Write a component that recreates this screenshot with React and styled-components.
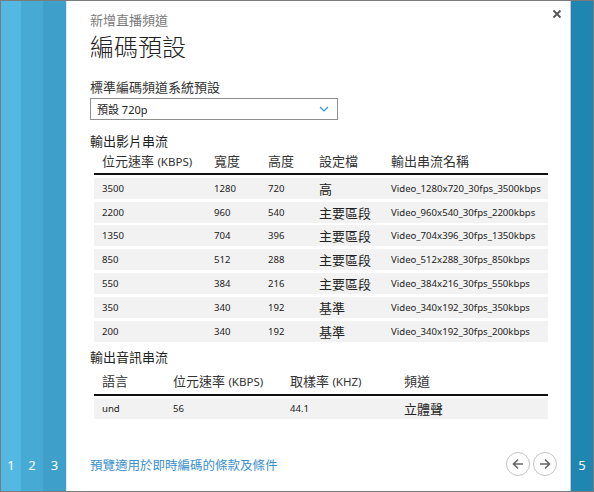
import styled, { createGlobalStyle } from "styled-components";

const GlobalStyle = createGlobalStyle`
  body {
    margin: 0;
    font-family: "Noto Sans", "Noto Sans CJK TC", sans-serif;
    color: #222;
  }
`;

const videoRows = [
  ["3500", "1280", "720", "高", "Video_1280x720_30fps_3500kbps"],
  ["2200", "960", "540", "主要區段", "Video_960x540_30fps_2200kbps"],
  ["1350", "704", "396", "主要區段", "Video_704x396_30fps_1350kbps"],
  ["850", "512", "288", "主要區段", "Video_512x288_30fps_850kbps"],
  ["550", "384", "216", "主要區段", "Video_384x216_30fps_550kbps"],
  ["350", "340", "192", "基準", "Video_340x192_30fps_350kbps"],
  ["200", "340", "192", "基準", "Video_340x192_30fps_200kbps"],
];

export default function App() {
  return (
    <>
      <GlobalStyle />
      <Frame>
        <Strip $bg="#53b8e2" $w={20}><StepNum>1</StepNum></Strip>
        <Strip $bg="#46aad4" $w={22}><StepNum>2</StepNum></Strip>
        <Strip $bg="#3d9fca" $w={23}><StepNum>3</StepNum></Strip>
        <Panel>
          <Close aria-label="close">
            <svg width="10" height="10" viewBox="0 0 10 10">
              <path d="M1.5 1.5L8.5 8.5M8.5 1.5L1.5 8.5" stroke="#555" strokeWidth="1.8" />
            </svg>
          </Close>
          <Subtitle>新增直播頻道</Subtitle>
          <Title>編碼預設</Title>
          <Label>標準編碼頻道系統預設</Label>
          <Select>
            <span>預設 720p</span>
            <svg width="10" height="6" viewBox="0 0 10 6">
              <path d="M1 1L5 5L9 1" stroke="#2f95d8" strokeWidth="1.2" fill="none" />
            </svg>
          </Select>

          <SectionTitle $top={12}>輸出影片串流</SectionTitle>
          <Table>
            <HeadRow $cols="112px 54px 51px 72px 1fr">
              <span>位元速率 <Small>(KBPS)</Small></span>
              <span>寬度</span>
              <span>高度</span>
              <span>設定檔</span>
              <span>輸出串流名稱</span>
            </HeadRow>
            {videoRows.map((r) => (
              <Row key={r[4]} $cols="112px 54px 51px 72px 1fr">
                <span>{r[0]}</span>
                <span>{r[1]}</span>
                <span>{r[2]}</span>
                <Cjk>{r[3]}</Cjk>
                <span>{r[4]}</span>
              </Row>
            ))}
          </Table>

          <SectionTitle $top={6}>輸出音訊串流</SectionTitle>
          <Table>
            <HeadRow $cols="71px 117px 114px 1fr" $gap={5}>
              <span>語言</span>
              <span>位元速率 <Small>(KBPS)</Small></span>
              <span>取樣率 <Small>(KHZ)</Small></span>
              <span>頻道</span>
            </HeadRow>
            <Row $cols="71px 117px 114px 1fr">
              <span>und</span>
              <span>56</span>
              <span>44.1</span>
              <Cjk>立體聲</Cjk>
            </Row>
          </Table>

          <Footer>
            <TermsLink href="#">預覽適用於即時編碼的條款及條件</TermsLink>
            <Nav>
              <RoundBtn aria-label="previous">
                <svg width="12" height="12" viewBox="0 0 12 12">
                  <path d="M11 6H1.5M6 1.5L1.5 6L6 10.5" stroke="#666" strokeWidth="1.6" fill="none" />
                </svg>
              </RoundBtn>
              <RoundBtn aria-label="next">
                <svg width="12" height="12" viewBox="0 0 12 12">
                  <path d="M1 6H10.5M6 1.5L10.5 6L6 10.5" stroke="#666" strokeWidth="1.6" fill="none" />
                </svg>
              </RoundBtn>
            </Nav>
          </Footer>
        </Panel>
        <Strip $bg="#1f86b1" $w={22} $edge><StepNum>5</StepNum></Strip>
      </Frame>
    </>
  );
}

const Frame = styled.div`
  width: 594px;
  height: 492px;
  box-sizing: border-box;
  border: 1px solid #7b7b7b;
  display: flex;
`;

const Strip = styled.div`
  width: ${(p) => p.$w}px;
  flex-shrink: 0;
  background: ${(p) => p.$bg};
  border-left: ${(p) => (p.$edge ? "1px solid #c9c9c9" : "none")};
  display: flex;
  flex-direction: column;
  justify-content: flex-end;
  align-items: center;
  padding-bottom: 18px;
`;

const StepNum = styled.span`
  color: #fff;
  font-size: 13px;
  line-height: 16px;
`;

const Panel = styled.div`
  position: relative;
  flex: 1;
  background: #fff;
  border-left: 1px solid #d4ecf7;
  padding: 10px 22px 0 23px;
  display: flex;
  flex-direction: column;
`;

const Close = styled.button`
  position: absolute;
  top: 7px;
  right: 7px;
  width: 12px;
  height: 12px;
  padding: 0;
  border: none;
  background: none;
  display: flex;
  align-items: center;
  justify-content: center;
`;

const Subtitle = styled.div`
  font-size: 13px;
  line-height: 18px;
  color: #7a7a7a;
  font-family: "Noto Sans CJK TC", sans-serif;
`;

const Title = styled.h1`
  margin: 1px 0 0;
  font-size: 24px;
  line-height: 32px;
  font-weight: 300;
  color: #222;
  font-family: "Noto Sans CJK TC", sans-serif;
`;

const Label = styled.div`
  margin-top: 16px;
  font-size: 13px;
  line-height: 18px;
  color: #333;
  font-family: "Noto Sans CJK TC", sans-serif;
`;

const Select = styled.div`
  margin-top: 2px;
  width: 248px;
  height: 22px;
  box-sizing: border-box;
  border: 1px solid #8f8f8f;
  display: flex;
  align-items: center;
  justify-content: space-between;
  padding: 0 8px 0 6px;
  font-size: 11px;
  color: #222;
`;

const SectionTitle = styled.div`
  margin-top: ${(p) => p.$top}px;
  font-size: 13px;
  line-height: 18px;
  color: #222;
  font-family: "Noto Sans CJK TC", sans-serif;
`;

const Table = styled.div`
  margin-left: 4px;
  width: 454px;
`;

const HeadRow = styled.div`
  display: grid;
  grid-template-columns: ${(p) => p.$cols};
  align-items: center;
  margin-top: ${(p) => p.$gap ?? 0}px;
  padding: 0 0 3px 8px;
  height: 20px;
  border-bottom: 2px solid #111;
  font-size: 13px;
  color: #333;
  span {
    white-space: nowrap;
  }
`;

const Small = styled.span`
  font-size: 11.5px;
`;

const Row = styled.div`
  display: grid;
  grid-template-columns: ${(p) => p.$cols};
  align-items: center;
  margin-top: 2.8px;
  height: 21px;
  padding-left: 8px;
  background: #f2f2f2;
  font-size: 9.6px;
  color: #222;
  span {
    white-space: nowrap;
  }
`;

const Cjk = styled.span`
  font-size: 13px;
  font-family: "Noto Sans CJK TC", sans-serif;
`;

const Footer = styled.div`
  margin-top: auto;
  margin-bottom: 15px;
  display: flex;
  align-items: center;
  justify-content: space-between;
`;

const TermsLink = styled.a`
  font-size: 12.5px;
  color: #3a8fcf;
  text-decoration: none;
  font-family: "Noto Sans CJK TC", sans-serif;
`;

const Nav = styled.div`
  display: flex;
  gap: 3px;
  margin-right: -9px;
`;

const RoundBtn = styled.button`
  width: 24px;
  height: 24px;
  border-radius: 50%;
  border: 1px solid #c4c4c4;
  background: #fff;
  padding: 0;
  display: flex;
  align-items: center;
  justify-content: center;
`;
